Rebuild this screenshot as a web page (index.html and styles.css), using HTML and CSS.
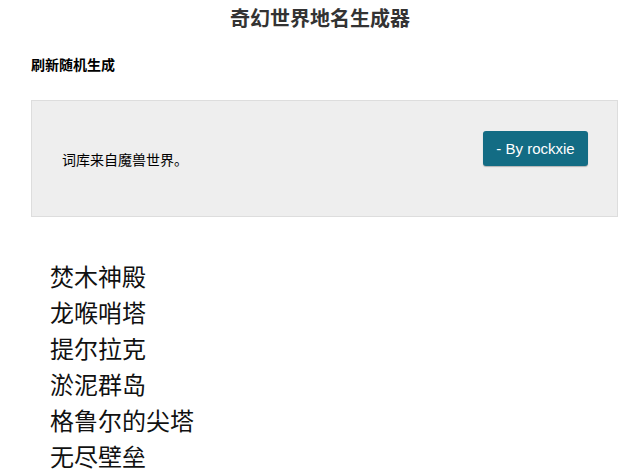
FILE: index.html
```html
<!DOCTYPE html>
<html lang="zh-CN">
<head>
<meta charset="utf-8">
<title>奇幻世界地名生成器</title>
<link rel="stylesheet" href="styles.css">
</head>
<body>
<h1 class="title">奇幻世界地名生成器</h1>
<a class="refresh" href="#">刷新随机生成</a>
<div class="well">
  <p class="intro">词库来自魔兽世界。</p>
  <a class="btn" href="#">- By rockxie</a>
</div>
<ul class="names">
  <li>焚木神殿</li>
  <li>龙喉哨塔</li>
  <li>提尔拉克</li>
  <li>淤泥群岛</li>
  <li>格鲁尔的尖塔</li>
  <li>无尽壁垒</li>
</ul>
</body>
</html>
```
FILE: styles.css
```css
html, body {
  margin: 0;
  padding: 0;
  background: #fff;
}
body {
  font-family: "Noto Sans CJK SC", "Noto Sans", sans-serif;
  color: #000;
}
.title {
  margin: 0;
  padding-top: 4px;
  font-size: 20px;
  line-height: 28px;
  font-weight: bold;
  color: #333;
  text-align: center;
}
.refresh {
  display: block;
  margin: 22px 0 0 31px;
  font-size: 14px;
  line-height: 20px;
  font-weight: bold;
  color: #000;
  text-decoration: none;
}
.well {
  margin: 26px 22px 0 31px;
  padding: 30px 29px 47px 30px;
  background: #eee;
  border: 1px solid #ddd;
  display: flex;
  align-items: flex-start;
  justify-content: space-between;
}
.intro {
  margin: 18px 0 0 0;
  font-size: 14px;
  line-height: 20px;
  color: #000;
}
.btn {
  display: block;
  width: 105px;
  height: 35px;
  line-height: 35px;
  text-align: center;
  background: #136c84;
  color: #fff;
  font-family: "Liberation Sans", Arial, sans-serif;
  font-size: 15px;
  text-decoration: none;
  border-radius: 3px;
  box-shadow: 0 1px 1px rgba(0,0,0,0.25);
}
.names {
  list-style: none;
  margin: 41px 0 0 0;
  padding: 0 0 0 50px;
}
.names li {
  font-size: 24px;
  line-height: 36px;
  color: #111;
}
```
